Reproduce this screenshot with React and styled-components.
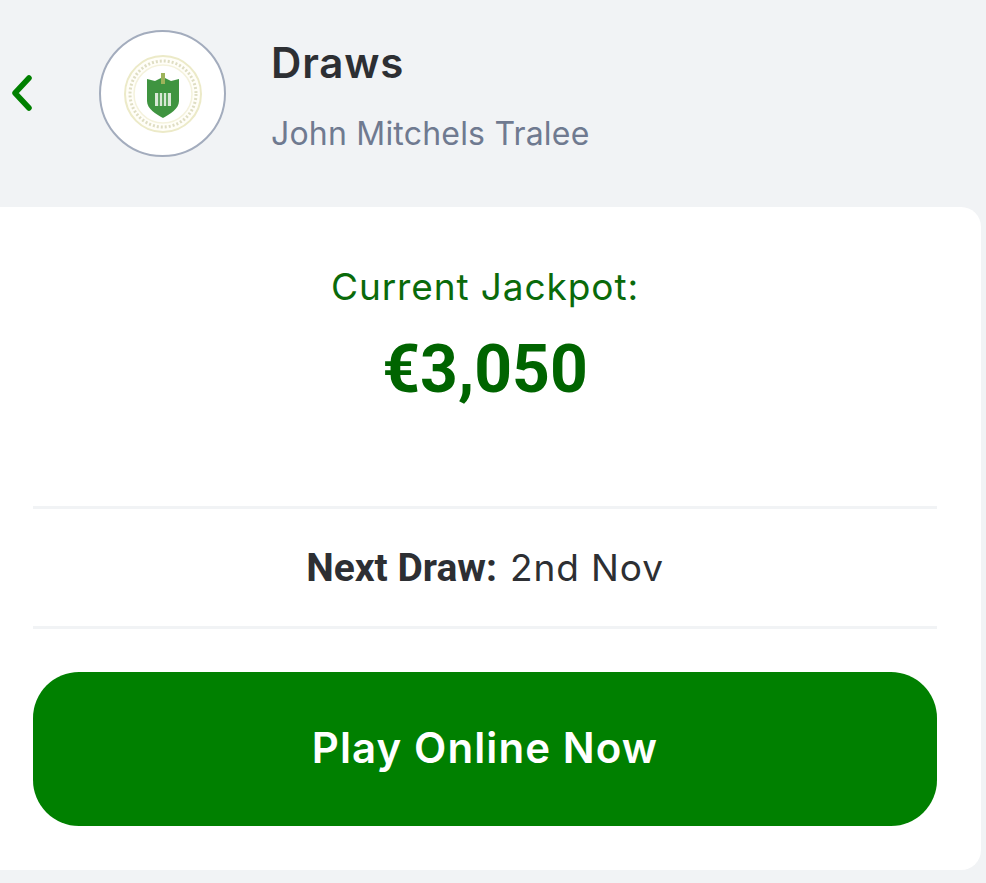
import React from 'react';
import styled, { createGlobalStyle } from 'styled-components';

const GlobalStyle = createGlobalStyle`
  html, body {
    margin: 0;
    padding: 0;
    height: 883px;
    overflow: hidden;
    background: #f1f3f5;
    font-family: 'Inter', 'Liberation Sans', sans-serif;
  }
`;

const Page = styled.div`
  width: 986px;
  height: 883px;
  background: #f1f3f5;
`;

const Header = styled.header`
  height: 207px;
  display: flex;
  align-items: flex-start;
`;

const BackButton = styled.button`
  width: 99px;
  height: 40px;
  margin-top: 73px;
  padding: 0 0 0 11px;
  border: 0;
  background: none;
  display: flex;
  align-items: center;
  color: #008000;
`;

const Avatar = styled.div`
  width: 127px;
  height: 127px;
  margin-top: 30px;
  box-sizing: border-box;
  border: 2px solid #a3acbd;
  border-radius: 50%;
  background: #fff;
  display: flex;
  align-items: center;
  justify-content: center;
`;

const Titles = styled.div`
  margin-left: 45px;
  padding-top: 38px;
`;

const Title = styled.h1`
  margin: 0;
  font-size: 42px;
  line-height: 50px;
  font-weight: 600;
  letter-spacing: 0.8px;
  color: #2d2f33;
`;

const Subtitle = styled.div`
  margin-top: 27px;
  font-size: 32px;
  line-height: 38px;
  letter-spacing: 0.2px;
  color: #6f7a90;
`;

const Card = styled.main`
  width: 981px;
  height: 663px;
  box-sizing: border-box;
  padding: 60px 44px 44px 33px;
  background: #fff;
  border-radius: 0 20px 20px 0;
`;

const JackpotLabel = styled.div`
  text-align: center;
  font-size: 37px;
  line-height: 40px;
  letter-spacing: 0.9px;
  color: #0a6a0a;
`;

const JackpotValue = styled.div`
  margin-top: 23px;
  text-align: center;
  font-family: 'Roboto', 'Liberation Sans', sans-serif;
  font-size: 66px;
  line-height: 80px;
  font-weight: 700;
  color: #006400;
`;

const DrawRow = styled.div`
  margin-top: 96px;
  height: 117px;
  border-top: 3px solid #f1f3f5;
  border-bottom: 3px solid #f1f3f5;
  display: flex;
  align-items: center;
  justify-content: center;
  gap: 13px;
  color: #2d2f33;
`;

const DrawLabel = styled.span`
  font-family: 'Roboto', 'Liberation Sans', sans-serif;
  font-size: 39px;
  font-weight: 700;
`;

const DrawDate = styled.span`
  font-size: 37px;
  letter-spacing: 0.9px;
`;

const PlayButton = styled.button`
  width: 100%;
  height: 154px;
  margin-top: 43px;
  padding: 0 0 4px;
  border: 0;
  border-radius: 46px;
  background: #008000;
  color: #fff;
  font-family: inherit;
  font-size: 42px;
  font-weight: 600;
  letter-spacing: 1.1px;
`;

function Crest() {
  return (
    <svg width="90" height="90" viewBox="0 0 90 90">
      <circle cx="45" cy="45" r="38" fill="#fffef8" stroke="#eceac8" strokeWidth="2" />
      <circle cx="45" cy="45" r="33" fill="none" stroke="#c9c8a0" strokeWidth="3" strokeDasharray="2 2" opacity="0.6" />
      <circle cx="45" cy="45" r="29" fill="#fff" stroke="#f4f2dc" strokeWidth="1.5" />
      <path d="M29 30 L37 32 L45 28 L53 32 L61 30 V52 C61 60 52 65 45 69 C38 65 29 60 29 52 Z" fill="#3f9440" />
      <path d="M43 24 h4 v11 h-4 Z" fill="#9db35a" />
      <path d="M37 44 h16 v13 h-16 Z" fill="#d9e8d6" />
      <path d="M41 44 v13 M45 44 v13 M49 44 v13" stroke="#3f9440" strokeWidth="1.6" />
    </svg>
  );
}

export default function App() {
  return (
    <Page>
      <GlobalStyle />
      <Header>
        <BackButton aria-label="Back">
          <svg width="22" height="36" viewBox="0 0 22 36" fill="none">
            <path d="M18 3 L4 18 L18 33" stroke="currentColor" strokeWidth="5.5" strokeLinecap="round" strokeLinejoin="round" />
          </svg>
        </BackButton>
        <Avatar>
          <Crest />
        </Avatar>
        <Titles>
          <Title>Draws</Title>
          <Subtitle>John Mitchels Tralee</Subtitle>
        </Titles>
      </Header>
      <Card>
        <JackpotLabel>Current Jackpot:</JackpotLabel>
        <JackpotValue>€3,050</JackpotValue>
        <DrawRow>
          <DrawLabel>Next Draw:</DrawLabel>
          <DrawDate>2nd Nov</DrawDate>
        </DrawRow>
        <PlayButton>Play Online Now</PlayButton>
      </Card>
    </Page>
  );
}
